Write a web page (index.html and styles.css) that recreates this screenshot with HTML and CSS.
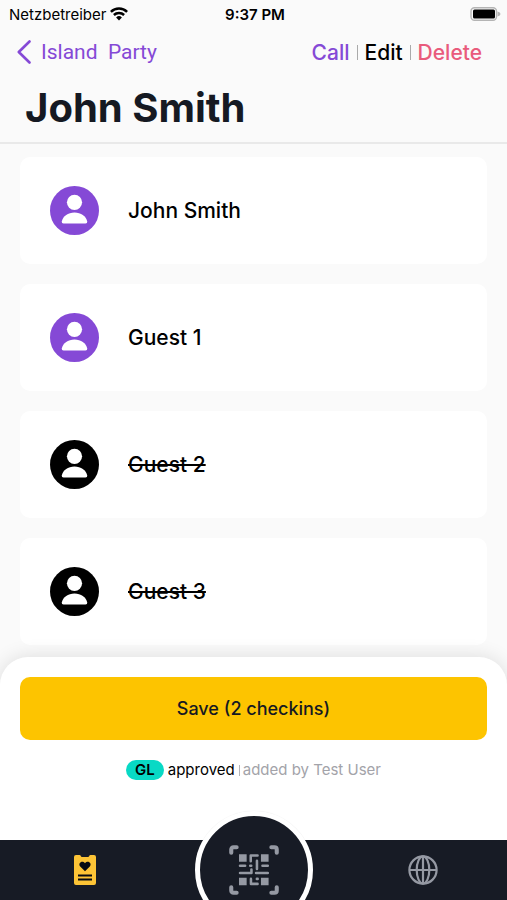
FILE: index.html
```html
<!DOCTYPE html>
<html lang="en">
<head>
<meta charset="utf-8">
<meta name="viewport" content="width=device-width, initial-scale=1">
<title>John Smith</title>
<link rel="stylesheet" href="styles.css">
</head>
<body>
<svg class="sprite" aria-hidden="true">
  <symbol id="person" viewBox="0 0 49 49">
    <circle cx="24.5" cy="24.5" r="24.5" fill="currentColor"/>
    <circle cx="24.5" cy="16.3" r="7.6" fill="#fff"/>
    <path d="M13.5 37.5q-2 0-1.700-2C13 30 18 26.500 24.500 26.500S36 30 37.200 35.500q.3 2-1.700 2z" fill="#fff"/>
  </symbol>
</svg>
<div class="app">
  <header class="header">
    <div class="status">
      <div class="carrier">
        <span>Netzbetreiber</span>
        <svg width="18" height="14" viewBox="0 0 18 14" aria-hidden="true">
          <g fill="none" stroke="#000" stroke-width="2.500">
            <path d="M.9 4.900a11.600 11.600 0 0 1 16.200 0"/>
            <path d="M3.900 8a7.300 7.300 0 0 1 10.200 0"/>
          </g>
          <path d="M9 13.500 6.100 10.500a4.200 4.200 0 0 1 5.800 0z"/>
        </svg>
      </div>
      <time class="clock">9:37 PM</time>
      <svg class="battery" width="31" height="14" viewBox="0 0 31 14" aria-hidden="true">
        <rect x="1" y=".7" width="25.500" height="12.600" rx="3.500" fill="#fafafa" stroke="#b4b4b4" stroke-width="1.400"/>
        <rect x="3" y="2.500" width="22" height="9" rx="1.500"/>
        <path d="M27.500 4.500q3 .8 3 2.500t-3 2.500z" fill="#b4b4b4"/>
      </svg>
    </div>
    <nav class="nav">
      <a class="back" href="#">
        <svg width="14" height="24" viewBox="0 0 14 24" aria-hidden="true"><path d="M12.500 1.500 1.800 12l10.700 10.500" fill="none" stroke="currentColor" stroke-width="2.600" stroke-linecap="round" stroke-linejoin="round"/></svg>
        <span>Island&nbsp; Party</span>
      </a>
      <div class="actions">
        <a class="call" href="#">Call</a><i class="bar"></i><a class="edit" href="#">Edit</a><i class="bar"></i><a class="delete" href="#">Delete</a>
      </div>
    </nav>
    <h1 class="title">John Smith</h1>
  </header>
  <main class="list">
    <button class="card" type="button"><svg class="avatar" aria-hidden="true"><use href="#person"/></svg><span>John Smith</span></button>
    <button class="card" type="button"><svg class="avatar" aria-hidden="true"><use href="#person"/></svg><span>Guest 1</span></button>
    <button class="card out" type="button"><svg class="avatar" aria-hidden="true"><use href="#person"/></svg><span>Guest 2</span></button>
    <button class="card out" type="button"><svg class="avatar" aria-hidden="true"><use href="#person"/></svg><span>Guest 3</span></button>
  </main>
  <section class="sheet">
    <button class="save" type="button">Save (2 checkins)</button>
    <p class="meta"><span class="badge">GL</span><span>approved</span><span class="added"><i class="tick"></i>added by Test User</span></p>
  </section>
  <nav class="tabs">
    <a href="#" aria-label="Guest list">
      <svg width="22" height="30" viewBox="0 0 22 30" aria-hidden="true">
        <path d="M2 0h3.500q1 0 1.300 1t1.200 1h6q.9 0 1.200-1t1.300-1H20q2 0 2 2v26q0 2-2 2H2q-2 0-2-2V2q0-2 2-2z" fill="#fdc436"/>
        <path d="M11 16.300 6.200 11.500C3.500 8.500 8 4.600 11 8.200c3-3.600 7.500.3 4.800 3.300z" fill="#080b12"/>
        <path d="M4 20.500h14M4 24.500h14" stroke="#080b12" stroke-width="1.800"/>
      </svg>
    </a>
    <a href="#" class="scan" aria-label="Scan code">
      <svg width="50" height="50" viewBox="0 0 49 49" aria-hidden="true">
        <g fill="none" stroke="#9599a3" stroke-linecap="round" stroke-linejoin="round">
          <path d="M2.200 7.500v-3q0-2.300 2.300-2.300h3M41.500 2.200h3q2.300 0 2.300 2.300v3M46.800 41.500v3q0 2.300-2.300 2.300h-3M7.500 46.800h-3q-2.300 0-2.300-2.300v-3" stroke-width="4"/>
          <path d="M21.300 16v-5.700H28M27.400 15.500v8M10.800 20.400h5M20.800 20.400h1M32.800 20.400h5.200M22 24v3.500H10.800M26.500 27.500H38M21.500 33.200v4.900H28M27.300 33.200h.8" stroke-width="2.500"/>
        </g>
        <path d="M9.800 9h7.500v7.500H9.800zM31.300 9h7.500v7.500h-7.500zM9.800 32h7.500v7.500H9.800zM31.300 32h7.500v7.500h-7.500z" fill="#9599a3"/>
      </svg>
    </a>
    <a href="#" aria-label="Language">
      <svg width="30" height="30" viewBox="0 0 30 30" fill="none" stroke="#9599a3" stroke-width="2.200" aria-hidden="true">
        <circle cx="15" cy="15" r="13.600"/><ellipse cx="15" cy="15" rx="6.300" ry="13.600"/><path d="M15 1.400v27.200M1.400 15h27.200"/>
      </svg>
    </a>
  </nav>
</div>
</body>
</html>
```
FILE: styles.css
```css
* { box-sizing: border-box; }
body { margin: 0; background: #fafafa; color: #000; font-family: Inter, "Liberation Sans", sans-serif; }
a { color: inherit; text-decoration: none; }
button { border: 0; font: inherit; color: inherit; cursor: pointer; }
.sprite { position: absolute; width: 0; height: 0; }
.app { display: flex; flex-direction: column; height: 100vh; overflow: hidden; }

.header { flex: none; border-bottom: 2px solid #e9e9e9; }
.status { display: grid; grid-template-columns: 1fr auto 1fr; align-items: center; height: 28px; padding: 0 6px 0 9px; font-size: 15px; }
.carrier { display: flex; align-items: center; gap: 4px; }
.clock { font-weight: 600; }
.battery { justify-self: end; }
.nav { display: flex; align-items: center; justify-content: space-between; height: 48px; padding: 0 25px 0 17px; font-size: 21px; }
.back { display: flex; align-items: center; gap: 10px; color: #8549d6; font-family: Roboto, sans-serif; }
.actions { display: flex; align-items: center; gap: 7px; font-weight: 500; }
.bar { width: 1px; height: 15px; background: #aaa; }
.call { color: #8549d6; }
.delete { color: #e95b7c; }
.title { margin: 0; padding: 8px 25px 10px; font-size: 40px; line-height: 48px; font-weight: 700; color: #151922; }

.list { flex: 1; min-height: 0; overflow: hidden; display: flex; flex-direction: column; gap: 20px; padding: 13px 20px 0; }
.card { flex: none; display: flex; align-items: center; gap: 29px; height: 107px; padding: 0 30px; border-radius: 10px; background: #fff; font-size: 21px; font-weight: 500; text-align: left; }
.avatar { width: 49px; height: 49px; color: #8549d6; }
.out { text-decoration: line-through; text-decoration-thickness: 2px; }
.out .avatar { color: #000; }

.sheet { position: relative; flex: none; height: 183px; padding: 20px 20px 0; border-radius: 28px 28px 0 0; background: #fff; box-shadow: 0 0 20px rgba(0, 0, 0, .12); }
.save { display: block; width: 100%; height: 63px; border-radius: 10px; background: #fdc400; color: #151922; font-size: 18px; font-weight: 500; }
.meta { display: flex; align-items: center; justify-content: center; gap: 4px; margin: 20px 0 0; font-size: 15px; line-height: 20px; }
.badge { padding: 0 9px; border-radius: 10px; background: #08d9c5; font-weight: 600; }
.added { display: flex; align-items: center; gap: 3px; color: #a3a3a9; }
.tick { width: 1px; height: 11px; background: #b5b5ba; }

.tabs { position: relative; flex: none; display: grid; grid-template-columns: repeat(3, 1fr); place-items: center; height: 60px; background: #171b25; }
.tabs a { display: flex; align-items: center; justify-content: center; }
.tabs .scan { width: 118px; height: 118px; margin: -29px 0; border: 5px solid #fff; border-radius: 50%; background: #171b25; box-shadow: 0 0 1px rgba(0, 0, 0, .12); }
```
